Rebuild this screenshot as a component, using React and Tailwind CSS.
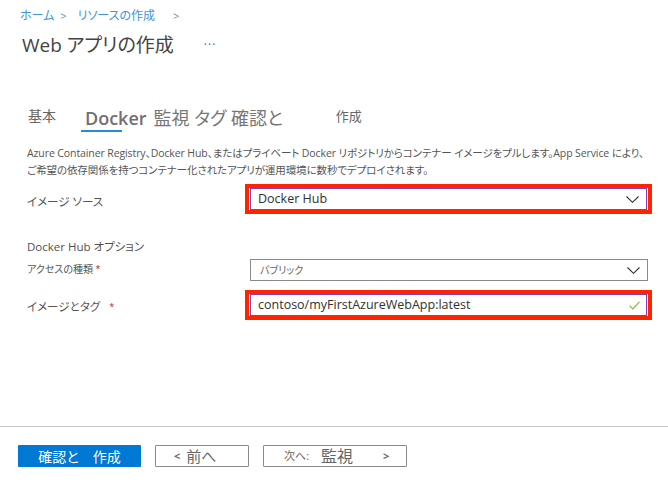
import React from "react";

const jp = "font-['Open_Sans','Noto_Sans_CJK_JP',sans-serif] [font-feature-settings:'palt']";

const Chevron = () => (
  <svg width="13" height="7" viewBox="0 0 13 7" fill="none">
    <path d="M0.5 0.5 L6.5 6.3 L12.5 0.5" stroke="#323130" strokeWidth="1.1" />
  </svg>
);

const Check = () => (
  <svg width="11" height="9" viewBox="0 0 11 9" fill="none">
    <path d="M0.6 4.6 L3.8 7.8 L10.4 0.8" stroke="#7fba3a" strokeWidth="1.2" />
  </svg>
);

const Star = () => <span className="text-[#a4262c] text-[9px] align-top">*</span>;

// red highlight box around a field
const Highlight = ({ children }) => (
  <div className="border-4 border-[#ff2400] px-[1px] w-[407px]">{children}</div>
);

const App = () => {
  return (
    <div className={`${jp} bg-white w-[668px] h-[487px] overflow-hidden`}>
      {/* Breadcrumb */}
      <div className="h-[32px] pl-[20px] flex items-center text-[12px] text-[#3d95dc]">
        <span>ホーム</span>
        <span className="ml-[6px] text-[11px]">&gt;</span>
        <span className="ml-[11px]">リソースの作成</span>
        <span className="ml-[18px] text-[#888] text-[11px]">&gt;</span>
      </div>

      {/* Title */}
      <div className="h-[26px] pl-[22px] flex items-center text-[#444]">
        <span className="text-[19px] leading-[26px]">Web アプリの作成</span>
        <span className="ml-[30px] text-[12px] text-[#666] tracking-[1px]">···</span>
      </div>

      {/* Tabs */}
      <div className="mt-[50px] pl-[28px] flex items-start h-[26px]">
        <span className="mt-[-2px] text-[14px] leading-[20px] text-[#666]">基本</span>
        <div className="ml-[29px] flex flex-col items-start">
          <span className="text-[18px] leading-[20px] font-semibold text-[#707070]">Docker</span>
          <div className="ml-[-4px] mt-[2px] w-[41px] h-[2px] bg-[#2a8ad4]" />
        </div>
        <span className="ml-[7px] text-[18px] leading-[20px] text-[#777]">監視 タグ 確認と</span>
        <span className="ml-[53px] mt-[-2px] text-[13px] leading-[20px] text-[#666]">作成</span>
      </div>

      {/* Description */}
      <div className="mt-[11px] pl-[27px] text-[10.5px] leading-[17px] text-[#555] whitespace-nowrap tracking-[-0.1px]">
        <div>
          Azure Container Registry、Docker Hub、またはプライベート Docker リポジトリからコンテナー イメージをプルします。App Service により、
        </div>
        <div>ご希望の依存関係を持つコンテナー化されたアプリが運用環境に数秒でデプロイされます。</div>
      </div>

      {/* Image source */}
      <div className="mt-[5px] pl-[27px] flex items-start">
        <div className="w-[218px] shrink-0 mt-[10px] text-[11.5px] leading-[16px] text-[#555]">イメージ ソース</div>
        <Highlight>
          <div className="h-[22px] border border-[#8a3fb0] flex items-center justify-between pl-[7px] pr-[7px]">
            <span className="text-[12.5px] text-[#323130]">Docker Hub</span>
            <Chevron />
          </div>
        </Highlight>
      </div>

      {/* Docker Hub options */}
      <div className="mt-[25px] pl-[27px] text-[11.5px] leading-[16px] text-[#505050]">Docker Hub オプション</div>

      <div className="mt-[4px] pl-[27px] flex items-start">
        <div className="w-[223px] shrink-0 mt-[3px] text-[10px] leading-[14px] text-[#555]">
          アクセスの種類 <Star />
        </div>
        <div className="w-[398px] h-[22px] border border-[#8a8a8a] flex items-center justify-between pl-[9px] pr-[7px]">
          <span className="text-[10px] text-[#666]">パブリック</span>
          <Chevron />
        </div>
      </div>

      <div className="mt-[9px] pl-[27px] flex items-start">
        <div className="w-[218px] shrink-0 mt-[9px] text-[11.5px] leading-[16px] text-[#555]">
          イメージとタグ <span className="ml-[6px]"><Star /></span>
        </div>
        <Highlight>
          <div className="h-[22px] border border-[#8a3fb0] flex items-center justify-between pl-[7px] pr-[6px]">
            <span className="text-[12.5px] text-[#323130]">contoso/myFirstAzureWebApp:latest</span>
            <Check />
          </div>
        </Highlight>
      </div>

      {/* Footer */}
      <div className="mt-[106px] h-px bg-[#c6c6c6]" />
      <div className="mt-[18px] pl-[18px] flex items-center gap-[14px]">
        <button className="w-[123px] h-[22px] bg-[#0078d4] text-white text-[14px] rounded-[1px] flex items-center justify-center">
          確認と　作成
        </button>
        <button className="w-[94px] h-[22px] border border-[#8a8a8a] flex items-center text-[#666] rounded-[1px]">
          <span className="ml-[18px] text-[11px] font-bold">&lt;</span>
          <span className="ml-[6px] text-[15px]">前へ</span>
        </button>
        <button className="w-[144px] h-[22px] border border-[#8a8a8a] flex items-center text-[#666] rounded-[1px]">
          <span className="ml-[20px] text-[11px]">次へ:</span>
          <span className="ml-[12px] text-[16px]">監視</span>
          <span className="ml-[30px] text-[11px] font-bold">&gt;</span>
        </button>
      </div>
    </div>
  );
};

export default App;
